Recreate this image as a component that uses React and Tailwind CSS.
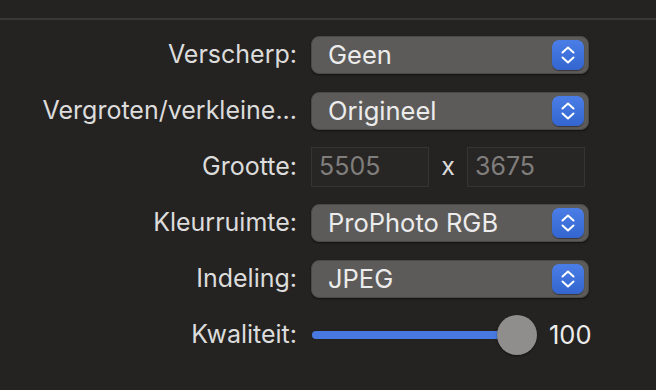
import { useState } from "react";

const font = { fontFamily: "Inter, 'Liberation Sans', sans-serif" };

function Stepper() {
  return (
    <div className="flex h-[30px] w-[32px] items-center justify-center rounded-[7px] bg-gradient-to-b from-[#4a7ee6] to-[#3465cf] shadow-[0_1px_1px_rgba(0,0,0,0.4)]">
      <svg width="14" height="18" viewBox="0 0 14 18" fill="none" stroke="white" strokeWidth="2" strokeLinecap="round" strokeLinejoin="round">
        <path d="M1.5 6.5 L7 1.5 L12.5 6.5" />
        <path d="M1.5 11.5 L7 16.5 L12.5 11.5" />
      </svg>
    </div>
  );
}

function Popup({ value }) {
  return (
    <div className="flex h-[38px] w-[278px] items-center justify-between rounded-[8px] border border-[#4a4947] bg-[#5c5b59] pl-[16px] pr-[4px] shadow-[0_1px_2px_rgba(0,0,0,0.5)]">
      <span className="text-[25.5px] text-[#ececec]">{value}</span>
      <Stepper />
    </div>
  );
}

function Row({ label, children }) {
  return (
    <div className="flex h-[56px] items-center">
      <div className="w-[298px] whitespace-nowrap pr-[1px] text-right text-[25px] text-[#dcdcdc]">{label}</div>
      <div className="ml-[13px] flex items-center">{children}</div>
    </div>
  );
}

export default function App() {
  const [quality] = useState(100);
  return (
    <div className="h-[390px] w-[656px] overflow-hidden bg-[#252321]" style={font}>
      <div className="h-[18px]" />
      <div className="h-[2px] bg-[#3a3836]" />
      <div className="pt-[7px]">
        <Row label="Verscherp:">
          <Popup value="Geen" />
        </Row>
        <Row label="Vergroten/verkleine...">
          <Popup value="Origineel" />
        </Row>
        <Row label="Grootte:">
          <div className="flex items-center">
            <div className="flex h-[40px] w-[118px] items-center border border-[#363432] bg-[#282624] pl-[7px] text-[25px] text-[#807e7c]">
              5505
            </div>
            <span className="w-[38px] text-center text-[25px] text-[#dcdcdc]">x</span>
            <div className="flex h-[40px] w-[118px] items-center border border-[#363432] bg-[#282624] pl-[7px] text-[25px] text-[#807e7c]">
              3675
            </div>
          </div>
        </Row>
        <Row label="Kleurruimte:">
          <Popup value="ProPhoto RGB" />
        </Row>
        <Row label="Indeling:">
          <Popup value="JPEG" />
        </Row>
        <Row label="Kwaliteit:">
          <div className="flex items-center">
            <div className="relative h-[40px] w-[226px]">
              <div className="absolute left-[1px] top-[16px] h-[8px] w-[200px] rounded-full bg-[#4779e0]" />
              <div className="absolute left-[186px] top-0 h-[40px] w-[40px] rounded-full bg-[#8f8e8d] shadow-[0_1px_2px_rgba(0,0,0,0.5)]" />
            </div>
            <span className="ml-[12px] text-[25.5px] text-[#ececec]">{quality}</span>
          </div>
        </Row>
      </div>
    </div>
  );
}
